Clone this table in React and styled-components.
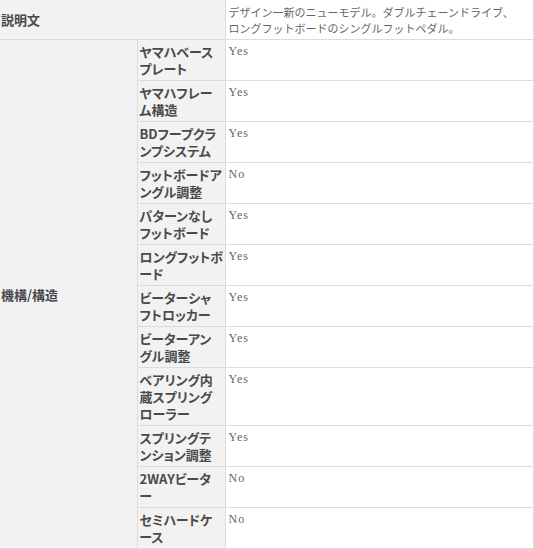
import React from "react";
import styled, { createGlobalStyle } from "styled-components";

const rows = [
  { label: ["ヤマハベース", "プレート"], value: "Yes" },
  { label: ["ヤマハフレー", "ム構造"], value: "Yes" },
  { label: ["BDフープクラ", "ンプシステム"], value: "Yes" },
  { label: ["フットボードア", "ングル調整"], value: "No" },
  { label: ["パターンなし", "フットボード"], value: "Yes" },
  { label: ["ロングフットボ", "ード"], value: "Yes" },
  { label: ["ビーターシャ", "フトロッカー"], value: "Yes" },
  { label: ["ビーターアン", "グル調整"], value: "Yes" },
  { label: ["ベアリング内", "蔵スプリング", "ローラー"], value: "Yes" },
  { label: ["スプリングテ", "ンション調整"], value: "Yes" },
  { label: ["2WAYビータ", "ー"], value: "No" },
  { label: ["セミハードケ", "ース"], value: "No" },
];

//Funtions
function App() {
  return (
    <>
      <GlobalStyle />
      <SpecTable>
        <colgroup>
          <Col $w={137} />
          <Col $w={88} />
          <col />
        </colgroup>
        <tbody>
          <tr>
            <HeadCell colSpan={2}>説明文</HeadCell>
            <DescCell>
              デザイン一新のニューモデル。ダブルチェーンドライブ、
              <br />
              ロングフットボードのシングルフットペダル。
            </DescCell>
          </tr>
          {rows.map((row, i) => (
            <tr key={i}>
              {i === 0 && (
                <HeadCell rowSpan={rows.length}>機構/構造</HeadCell>
              )}
              <LabelCell>
                {row.label.map((line, j) => (
                  <Line key={j}>{line}</Line>
                ))}
              </LabelCell>
              <ValueCell>{row.value}</ValueCell>
            </tr>
          ))}
        </tbody>
      </SpecTable>
    </>
  );
}

export default App;

//Styles
const GlobalStyle = createGlobalStyle`
  body {
    margin: 0;
    background: #ffffff;
    font-family: "Noto Sans CJK JP", "Noto Sans", sans-serif;
  }
`;

const SpecTable = styled.table`
  width: 534px;
  border-collapse: collapse;
  table-layout: fixed;
  border-right: 1px solid #dcdcdc;
  tr > * {
    border-bottom: 1px solid #dcdcdc;
  }
`;

const Col = styled.col`
  width: ${(p) => p.$w}px;
`;

const HeadCell = styled.th`
  background: #f2f2f2;
  color: #4a4a4a;
  font-size: 13px;
  font-weight: bold;
  text-align: left;
  vertical-align: middle;
  padding: 0 0 0 1px;
  border-right: 1px solid #dcdcdc;
  height: 39px;
`;

const DescCell = styled.td`
  color: #666666;
  font-size: 11px;
  line-height: 16px;
  padding: 4px 3px 3px 3px;
  vertical-align: top;
  white-space: nowrap;
`;

const LabelCell = styled.th`
  background: #f2f2f2;
  color: #4a4a4a;
  font-size: 13px;
  font-weight: bold;
  line-height: 17px;
  text-align: left;
  vertical-align: top;
  padding: 3px 1px 3px 2px;
  border-right: 1px solid #dcdcdc;
  font-feature-settings: "palt";
`;

const Line = styled.span`
  display: block;
  white-space: nowrap;
`;

const ValueCell = styled.td`
  color: #666666;
  font-family: "Liberation Serif", serif;
  font-size: 12px;
  letter-spacing: 1px;
  line-height: 17px;
  vertical-align: top;
  padding: 3px 3px 3px 3px;
`;
